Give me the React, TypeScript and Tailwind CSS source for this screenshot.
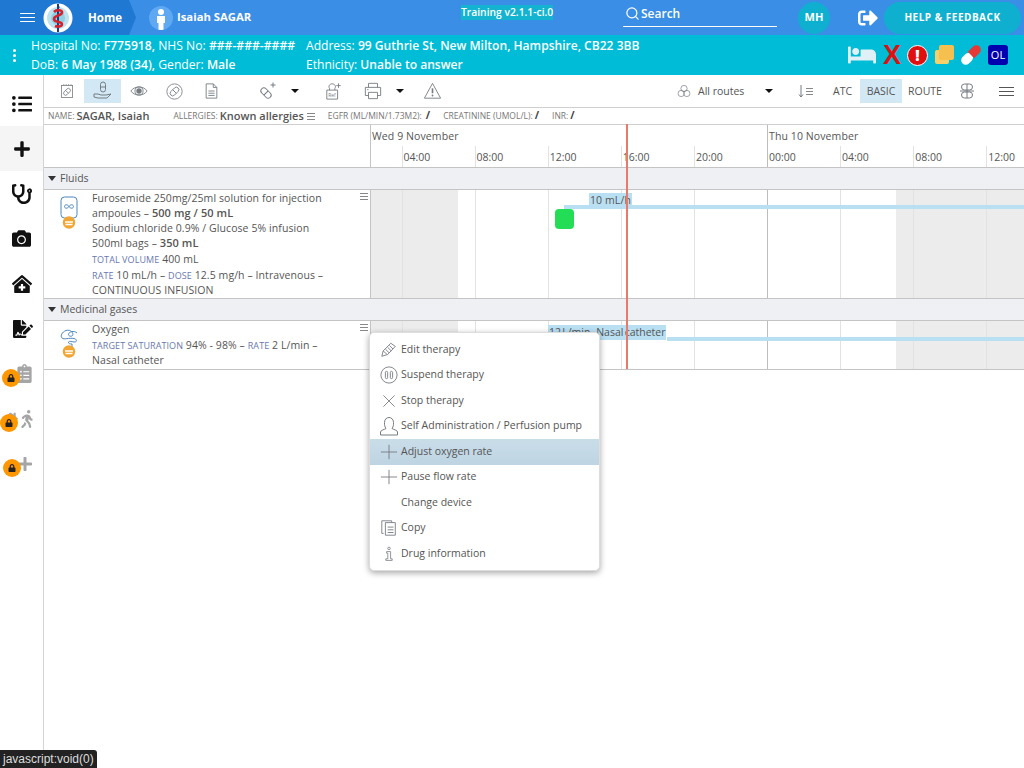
import React from "react";
import { FaBed, FaCamera, FaClinicMedical, FaFileSignature, FaListUl, FaLock, FaPlus, FaSignOutAlt, FaStethoscope, FaWalking, FaClipboardList, FaHome } from "react-icons/fa";
import { Search } from "lucide-react";

const G = "#777c82";
const S = ({ w = 20, h = 20, vb = "0 0 20 20", sw = 1, children, c = G }: { w?: number; h?: number; vb?: string; sw?: number; c?: string; children: React.ReactNode }) => (
  <svg width={w} height={h} viewBox={vb} fill="none" stroke={c} strokeWidth={sw} className="block flex-none">{children}</svg>
);
const Caret = () => <div className="h-0 w-0 border-x-[4px] border-t-[4px] border-x-transparent border-t-[#111]" />;
const Tri = () => <div className="h-0 w-0 border-x-[4px] border-t-[5px] border-x-transparent border-t-[#333]" />;
const Lines = () => (
  <div className="flex w-[8px] flex-col gap-[2px]">
    <div className="h-px bg-[#888]" /><div className="h-px bg-[#888]" /><div className="h-px bg-[#888]" />
  </div>
);

const Logo = () => (
  <svg width="30" height="30" viewBox="0 0 30 30" className="block flex-none">
    <circle cx="15" cy="15" r="14.5" fill="#fff" />
    <circle cx="15" cy="15" r="11" fill="#bfe3ee" />
    <circle cx="15" cy="15" r="7" fill="#8fd0e2" />
    <path d="M15 1V29" stroke="#1f3f7a" strokeWidth="2" />
    <path d="M11 9C14 6 20 7 19 10C18 13 11 12 11 16C11 20 19 18 19 21C19 24 14 24 12 23" stroke="#d3232f" strokeWidth="2.6" fill="none" />
    <path d="M14 2L17 4L15 6Z" fill="#1f3f7a" />
  </svg>
);

const SideBtn = ({ children, active, h = 45 }: { children: React.ReactNode; active?: boolean; h?: number }) => (
  <div className={`relative flex w-full items-center justify-center ${active ? "bg-[#f5f5f5]" : ""}`} style={{ height: h }}>{children}</div>
);
const Lock = ({ className }: { className: string }) => (
  <div className={`absolute flex h-[18px] w-[18px] items-center justify-center rounded-full bg-[#ff9800] text-[#222] ${className}`}>
    <FaLock size={8} />
  </div>
);

const Cells = ({ labels, shade }: { labels?: boolean; shade?: boolean }) => {
  const hours = ["04:00", "08:00", "12:00", "16:00", "20:00", "00:00", "04:00", "08:00", "12:00"];
  return (
    <div className="flex h-full">
      <div className={`h-full w-[30.5px] flex-none ${shade ? "bg-[#ececec]" : ""}`} />
      {hours.map((t, i) => (
        <div key={i} className={`relative h-full w-[73.1px] flex-none border-l ${i === 5 ? "border-[#bdbdbd]" : "border-[#e2e2e2]"} ${shade && i >= 7 ? "bg-[#ececec]" : ""}`}>
          {shade && i === 0 && <div className="h-full w-[55px] bg-[#ececec]" />}
          {shade && i === 6 && <div className="ml-[55px] h-full w-[18px] bg-[#ececec]" />}
          {labels && <span className="block pl-[1px] pt-[3px] text-[10.5px] leading-[16px] text-[#555]">{t}</span>}
        </div>
      ))}
    </div>
  );
};

const Menu = [
  ["Edit therapy", <S key="a" w={18} h={18}><path d="M2 17L3.5 11L12 2.5L17 6L8.5 15L2 17ZM3.5 11L8 15M6 9L10 13M8.5 7L12.5 11M10.5 5L14.5 9" /></S>],
  ["Suspend therapy", <S key="b" w={18} h={18}><circle cx="10" cy="10" r="9" /><rect x="6" y="6" width="2.5" height="8" rx="1.2" /><rect x="11.5" y="6" width="2.5" height="8" rx="1.2" /></S>],
  ["Stop therapy", <S key="c" w={16} h={16} sw={1.1}><path d="M3 3L17 17M17 3L3 17" /></S>],
  ["Self Administration / Perfusion pump", <S key="d" w={20} h={20}><path d="M1.5 19V16C1.5 14 6 13.5 7 12.5C5.5 10.5 5.5 9 5.5 6.5C5.5 3 8 1.5 10 1.5C12 1.5 14.5 3 14.5 6.5C14.5 9 14.5 10.5 13 12.5C14 13.5 18.5 14 18.5 16V19Z" /></S>],
  ["Adjust oxygen rate", <S key="e" w={18} h={18}><path d="M10 2V18M1 10H19" /></S>],
  ["Pause flow rate", <S key="f" w={18} h={18}><path d="M10 2V18M1 10H19" /></S>],
  ["Change device", null],
  ["Copy", <S key="g" w={18} h={18}><path d="M4 16H2V2H13V4M6 4H17V18H6ZM8.5 9H15M8.5 12H15M8.5 15H15" /></S>],
  ["Drug information", <S key="h" w={16} h={18}><circle cx="10" cy="3" r="1.6" /><path d="M7 7H12V16H14V18H6V16H8.5V9H7Z" /></S>],
] as [string, React.ReactNode][];

export default function App() {
  return (
    <div className="relative flex h-[768px] w-[1024px] flex-col overflow-hidden bg-white text-[#555] [font-family:'Open_Sans',sans-serif]">
      {/* header */}
      <header className="flex h-[35px] flex-none items-center bg-[#3a8ee6] text-white">
        <div className="flex h-full w-[136px] flex-none items-center bg-[#1f78d1] pl-[20px] [clip-path:polygon(0_0,129px_0,136px_50%,129px_100%,0_100%)]">
          <div className="flex w-[15px] flex-col gap-[3px]">
            <div className="h-px bg-white" /><div className="h-px bg-white" /><div className="h-px bg-white" />
          </div>
          <div className="ml-[8px]"><Logo /></div>
          <span className="ml-[15px] text-[11.5px] font-bold">Home</span>
        </div>
        <div className="ml-[13px] flex h-[24px] w-[24px] flex-none items-end justify-center overflow-hidden rounded-full bg-[#5ea9f2]">
          <svg width="12" height="22" viewBox="0 0 12 22" fill="#fff" className="block"><circle cx="6" cy="4" r="3" /><path d="M2 8H10L10 15H8.5V22H3.5V15H2Z" /></svg>
        </div>
        <span className="ml-[4px] w-[110px] flex-none text-[11.3px] font-bold">Isaiah SAGAR</span>
        <div className="ml-[174px] w-[162px] flex-none self-start pt-[5px]">
          <span className="block w-fit bg-[#14b3cf] text-[10.3px] font-semibold leading-[15px]">Training v2.1.1-ci.0</span>
        </div>
        <div className="flex h-[27px] w-[154px] flex-none items-center self-start border-b border-white pl-[2px] pt-[1px]">
          <Search size={15} strokeWidth={2} />
          <span className="ml-[1px] text-[12px] font-semibold">Search</span>
        </div>
        <div className="ml-[21px] flex h-[32px] w-[32px] flex-none items-center justify-center rounded-full bg-[#0fb0cf] text-[11px] font-bold">MH</div>
        <FaSignOutAlt size={20} className="ml-[28px] flex-none" />
        <div className="ml-[6px] flex h-[32px] w-[137px] flex-none items-center justify-center rounded-full bg-[#0fb0cf] text-[10px] font-bold tracking-[0.5px]">HELP &amp; FEEDBACK</div>
      </header>
      {/* patient bar */}
      <div className="flex h-[40px] flex-none items-center bg-[#00bcd6] text-white">
        <div className="flex w-[31px] flex-none flex-col items-center gap-[2px] pr-[3px]">
          <div className="h-[3px] w-[3px] rounded-full bg-white" /><div className="h-[3px] w-[3px] rounded-full bg-white" /><div className="h-[3px] w-[3px] rounded-full bg-white" />
        </div>
        <div className="w-[275px] flex-none text-[12.15px] leading-[19px] [&>div]:whitespace-nowrap">
          <div>Hospital No: <b className="font-semibold">F775918,</b> NHS No: <b className="font-semibold">###-###-####</b></div>
          <div>DoB: <b className="font-semibold">6 May 1988 (34),</b> Gender: <b className="font-semibold">Male</b></div>
        </div>
        <div className="w-[546px] flex-none text-[12.07px] leading-[19px] [&>div]:whitespace-nowrap">
          <div>Address: <b className="font-semibold">99 Guthrie St, New Milton, Hampshire, CB22 3BB</b></div>
          <div>Ethnicity: <b className="font-semibold">Unable to answer</b></div>
        </div>
        <div className="flex flex-none items-center">
          <FaBed size={28} className="ml-[-4px] text-[#dff1f6]" />
          <span className="ml-[7px] w-[18px] text-[27px] font-bold leading-none text-[#e01010] [font-family:'Liberation_Sans',sans-serif]">X</span>
          <div className="ml-[6px] flex h-[21px] w-[21px] items-center justify-center rounded-full border border-white bg-[#e01010] text-[#fff]">
            <span className="text-[15px] font-extrabold leading-none">!</span>
          </div>
          <div className="relative ml-[7px] h-[20px] w-[19px]">
            <div className="absolute left-0 top-[5px] h-[14px] w-[14px] rounded-[2px] bg-[#f7d06a]" />
            <div className="absolute left-[4px] top-0 h-[15px] w-[15px] rounded-[2px] bg-[#f5c04f]" />
          </div>
          <svg width="24" height="24" viewBox="0 0 24 24" className="ml-[5px] mr-[-2px] block flex-none">
            <g transform="rotate(-45 12 12)"><rect x="0" y="7.5" width="13" height="9" rx="4.5" fill="#fff" /><path d="M12 7.5H19.5A4.5 4.5 0 0 1 19.5 16.5H12Z" fill="#e53935" /></g>
          </svg>
          <div className="ml-[7px] flex h-[20px] w-[20px] items-center justify-center rounded-[3px] bg-[#0000b0] text-[11px] text-white">OL</div>
        </div>
      </div>
      {/* body */}
      <div className="flex min-h-0 flex-1">
        <aside className="relative flex w-[44px] flex-none flex-col border-r border-[#d4d4d4] pt-[7px] text-[#111]">
          <SideBtn h={44}><FaListUl size={20} /></SideBtn>
          <SideBtn active h={45}><FaPlus size={18} /></SideBtn>
          <SideBtn><FaStethoscope size={20} /></SideBtn>
          <SideBtn><FaCamera size={19} /></SideBtn>
          <SideBtn><FaClinicMedical size={20} /></SideBtn>
          <SideBtn><FaFileSignature size={20} className="ml-[2px]" /></SideBtn>
          <SideBtn><FaClipboardList size={19} className="ml-[5px] text-[#a5a5a5]" /><Lock className="left-[2px] top-[18px]" /></SideBtn>
          <SideBtn><FaHome size={15} className="ml-[-4px] text-[#a5a5a5]" /><FaWalking size={18} className="text-[#a5a5a5]" /><Lock className="left-0 top-[18px]" /></SideBtn>
          <SideBtn><FaPlus size={16} className="ml-[7px] text-[#a5a5a5]" /><Lock className="left-[3px] top-[18px]" /></SideBtn>
        </aside>
        <main className="relative min-w-0 flex-1">
          {/* toolbar */}
          <div className="flex h-[33px] items-center border-b border-[#cfcfcf]">
            <div className="ml-[13px] flex w-[20px] justify-center">
              <S w={16} h={16}><rect x="3" y="3" width="14" height="15" /><path d="M6 3V1.5M9 3V1.5M12 3V1.5M15 3V1.5" /><g transform="rotate(-45 10 11)"><rect x="5" y="8.5" width="10" height="5" rx="2.5" /><path d="M10 8.5V13.5" /></g></S>
            </div>
            <div className="ml-[7px] flex h-[24px] w-[37px] items-center justify-center bg-[#d3e8f5]">
              <S w={20} h={20}><rect x="7.5" y="1" width="5" height="10" rx="2.5" /><path d="M7.5 6H12.5M1 13H5L8 14H13L18 13L14 17H5L1 16Z" /></S>
            </div>
            <div className="ml-[8px] flex w-[20px] justify-center">
              <S w={18} h={14} vb="0 0 20 14"><path d="M1 7C5 1 15 1 19 7C15 13 5 13 1 7Z" /><circle cx="10" cy="7" r="3" fill={G} stroke="none" /><circle cx="10" cy="7" r="4.5" /></S>
            </div>
            <div className="ml-[15px] flex w-[20px] justify-center">
              <S w={17} h={17}><circle cx="10" cy="10" r="9" /><g transform="rotate(-45 10 10)"><rect x="4" y="7" width="12" height="6" rx="3" /><path d="M10 7V13" /></g></S>
            </div>
            <div className="ml-[17px] flex w-[20px] justify-center">
              <S w={13} h={16} vb="0 0 14 18"><path d="M1 1H9L13 5V17H1ZM9 1V5H13M3.5 9H10.5M3.5 11.5H10.5M3.5 14H10.5" /></S>
            </div>
            <div className="ml-[36px] flex w-[22px] justify-center">
              <S w={20} h={20}><g transform="rotate(45 8 12)"><rect x="2" y="9" width="12" height="6" rx="3" /><path d="M8 9V15" /></g><path d="M15 1.5V6.5M12.5 4H17.5" /></S>
            </div>
            <div className="ml-[12px]"><Caret /></div>
            <div className="ml-[24px] flex w-[22px] justify-center">
              <S w={18} h={20}><path d="M2 9H14V19H2ZM5 9V7C3.5 5 5 2 8 2C11 2 12.5 5 11 7V9M15 1.5V6.5M12.5 4H17.5" /><text x="3.6" y="16.5" fontSize="5.5" fill={G} stroke="none">Ref</text></S>
            </div>
            <div className="ml-[17px] flex w-[22px] justify-center">
              <S w={18} h={18}><path d="M5 6V1.5H15V6M5 15H1.5V6H18.5V15H15M5 11.5H15V18.5H5Z" /><path d="M3.5 8.5H5" /></S>
            </div>
            <div className="ml-[12px]"><Caret /></div>
            <div className="ml-[18px] flex w-[20px] justify-center">
              <S w={19} h={18}><path d="M10 1.5L19 18H1Z" strokeLinejoin="round" /><path d="M10 7V12.5" strokeWidth="1.8" /><circle cx="10" cy="15" r="1" fill={G} stroke="none" /></S>
            </div>
            <div className="ml-[235px] flex w-[14px] justify-center">
              <S w={14} h={14}><circle cx="10" cy="6.5" r="4.5" /><circle cx="6" cy="13.5" r="4.5" /><circle cx="14" cy="13.5" r="4.5" /></S>
            </div>
            <span className="ml-[7px] w-[67px] flex-none pt-px text-[10.5px]">All routes</span>
            <Caret />
            <div className="ml-[25px] flex w-[16px] items-center gap-[2px]">
              <S w={6} h={14} vb="0 0 6 14"><path d="M3 1V13M1 10.5L3 13L5 10.5" /></S>
              <div className="flex flex-col gap-[2px]"><div className="h-px w-[7px] bg-[#888]" /><div className="h-px w-[7px] bg-[#888]" /><div className="h-px w-[7px] bg-[#888]" /></div>
            </div>
            <span className="ml-[19px] w-[27px] flex-none pt-px text-[10.5px]">ATC</span>
            <div className="flex h-[24px] w-[42px] flex-none items-center justify-center bg-[#d3e8f5] pt-px text-[10.5px]">BASIC</div>
            <span className="ml-[6px] w-[37px] flex-none pt-px text-[10.5px]">ROUTE</span>
            <div className="ml-[13px] flex w-[18px] justify-center">
              <S w={14} h={16} vb="0 0 14 16"><rect x="1.5" y="1" width="11" height="6" rx="3" /><rect x="1.5" y="9" width="11" height="6" rx="3" /><path d="M7 1V15M0 8H14" /></S>
            </div>
            <div className="ml-[23px] flex w-[15px] flex-col gap-[3px]">
              <div className="h-px bg-[#555]" /><div className="h-px bg-[#555]" /><div className="h-px bg-[#555]" />
            </div>
          </div>
          {/* patient data line */}
          <div className="flex h-[17px] items-center whitespace-nowrap border-b border-[#cfcfcf] pl-[4px] text-[8.5px] text-[#777]">
            <span>NAME:</span><b className="ml-[2px] text-[11px] font-semibold text-[#555]">SAGAR, Isaiah</b>
            <span className="ml-[24px]">ALLERGIES:</span><b className="ml-[2px] text-[11px] font-semibold text-[#555]">Known allergies</b>
            <div className="ml-[3px]"><Lines /></div>
            <span className="ml-[13px]">EGFR (ML/MIN/1.73M2):</span><b className="ml-[4px] text-[10.5px] font-bold text-[#444]">/</b>
            <span className="ml-[13px]">CREATININE (UMOL/L):</span><b className="ml-[2px] text-[10.5px] font-bold text-[#444]">/</b>
            <span className="ml-[13px]">INR:</span><b className="ml-[2px] text-[10.5px] font-bold text-[#444]">/</b>
          </div>
          {/* timeline head */}
          <div className="flex h-[43px] border-b border-[#c4c4c4]">
            <div className="w-[327px] flex-none border-r border-[#c4c4c4]" />
            <div className="relative min-w-0 flex-1 overflow-hidden">
              <div className="flex h-[21px] items-center text-[10.5px] tracking-[0.1px]">
                <span className="w-[396px] flex-none pl-[1px] pt-[2px]">Wed 9 November</span>
                <span className="border-l border-[#bdbdbd] pl-px pt-[2px] leading-[19px]">Thu 10 November</span>
              </div>
              <div className="h-[21px]"><Cells labels /></div>
            </div>
          </div>
          {/* fluids */}
          <GroupRow label="Fluids" />
          <div className="flex h-[109px] border-b border-[#c4c4c4]">
            <RowLeft icon={<FluidIcon />}>
              <div className="pt-px text-[10.5px] leading-[15px] tracking-[0.08px]">
                <div>Furosemide 250mg/25ml solution for injection</div>
                <div>ampoules – <b className="text-[11px] font-semibold leading-none">500 mg / 50 mL</b></div>
                <div>Sodium chloride 0.9% / Glucose 5% infusion</div>
                <div>500ml bags – <b className="text-[11px] font-semibold leading-none">350 mL</b></div>
                <div className="mt-px"><L>TOTAL VOLUME</L> 400 mL</div>
                <div className="mt-px"><L>RATE</L> 10 mL/h – <L>DOSE</L> 12.5 mg/h – Intravenous –</div>
                <div>CONTINUOUS INFUSION</div>
              </div>
            </RowLeft>
            <div className="relative min-w-0 flex-1 overflow-hidden">
              <Cells shade />
              <div className="absolute left-[218px] top-[3px] bg-[#b9dff3] px-px text-[10.5px] leading-[15px] tracking-[0.1px]">10 mL/h</div>
              <div className="absolute left-[193px] right-0 top-[15px] h-[4px] bg-[#b9dff3]" />
              <div className="absolute left-[184px] top-[19px] h-[20px] w-[19px] rounded-[4px] bg-[#22dd55]" />
            </div>
          </div>
          <GroupRow label="Medicinal gases" />
          <div className="flex h-[49px] border-b border-[#c4c4c4]">
            <RowLeft icon={<OxygenIcon />}>
              <div className="pt-px text-[10.5px] leading-[15px] tracking-[0.08px]">
                <div>Oxygen</div>
                <div className="mt-px"><L>TARGET SATURATION</L> 94% - 98% – <L>RATE</L> 2 L/min –</div>
                <div>Nasal catheter</div>
              </div>
            </RowLeft>
            <div className="relative min-w-0 flex-1 overflow-hidden">
              <Cells shade />
              <div className="absolute left-[177px] top-[4px] whitespace-nowrap bg-[#b9dff3] pl-px text-[10.5px] leading-[15px] [word-spacing:-1.5px]">12 L/min - Nasal catheter</div>
              <div className="absolute left-[296px] right-0 top-[16px] h-[4px] bg-[#b9dff3]" />
            </div>
          </div>
          {/* current time marker */}
          <div className="absolute left-[582px] top-[49px] h-[245px] w-[2px] bg-[#e8796b]" />
          {/* context menu */}
          <div className="absolute left-[325px] top-[257px] w-[231px] rounded-[5px] border border-[#ddd] bg-white pb-[3px] pt-[4px] shadow-[0_2px_6px_rgba(0,0,0,0.35)]">
            {Menu.map(([label, icon]) => (
              <div key={label} className={`flex h-[25.5px] items-center text-[10.5px] ${label === "Adjust oxygen rate" ? "bg-gradient-to-b from-[#c9dde9] to-[#bfd4e2]" : ""}`}>
                <div className="flex w-[31px] flex-none justify-center pl-[6px]">{icon}</div>
                <span className="whitespace-nowrap">{label}</span>
              </div>
            ))}
          </div>
        </main>
      </div>
      {/* status tooltip */}
      <div className="absolute bottom-0 left-0 flex h-[18px] items-center rounded-tr-[3px] bg-[#222] px-[3px] text-[12px] text-[#ddd] [font-family:'Liberation_Sans',sans-serif]">javascript:void(0)</div>
    </div>
  );
}

function L({ children }: { children: React.ReactNode }) {
  return <span className="text-[9px] leading-none text-[#6a78b0]">{children}</span>;
}

function GroupRow({ label }: { label: string }) {
  return (
    <div className="flex h-[22px] items-center border-b border-[#c4c4c4] bg-[#eef0f4] pl-[4px] text-[10.5px]">
      <Tri />
      <span className="ml-[4px]">{label}</span>
    </div>
  );
}

function RowLeft({ icon, children }: { icon: React.ReactNode; children: React.ReactNode }) {
  return (
    <div className="relative flex w-[327px] flex-none border-r border-[#c4c4c4]">
      <div className="w-[48px] flex-none pl-[15px] pt-[6px]">{icon}</div>
      <div className="min-w-0 flex-1 overflow-hidden whitespace-nowrap">{children}</div>
      <div className="absolute right-[2px] top-[3px]"><Lines /></div>
    </div>
  );
}

function OrangeDot() {
  return (
    <svg width="14" height="13" viewBox="0 0 14 13" className="block">
      <circle cx="7" cy="6.5" r="6.2" fill="#f0a534" />
      <path d="M3 6H11M3.5 8.5H10.5" stroke="#fff" strokeWidth="1.4" />
    </svg>
  );
}

function FluidIcon() {
  return (
    <div className="flex w-[20px] flex-col items-center">
      <svg width="18" height="23" viewBox="0 0 18 23" fill="none" stroke="#4d87bd" strokeWidth="1" className="block">
        <rect x="1" y="1" width="16" height="21" rx="3.5" />
        <path d="M9 10.5C7.5 8 4.5 8.5 4.5 10.5C4.5 12.5 7.5 13 9 10.5C10.5 8 13.5 8.5 13.5 10.5C13.5 12.5 10.5 13 9 10.5Z" />
      </svg>
      <div className="-mt-[3px]"><OrangeDot /></div>
    </div>
  );
}

function OxygenIcon() {
  return (
    <div className="flex w-[20px] flex-col items-center">
      <svg width="19" height="21" viewBox="0 0 19 21" fill="none" stroke="#4d87bd" strokeWidth="1" className="block">
        <path d="M17 6C14 3 9 5 8.5 7C8 9 11 10 12.5 8.5C14 6.5 11 2 6 3.5C2 5 0 9 2 11C4 13 9 10.5 14 11.5C17 12 17 15 15 15C12 15 9 13.5 8.5 15C8 16.5 10 17 12 17V21" />
      </svg>
      <div className="-mt-[3px]"><OrangeDot /></div>
    </div>
  );
}
